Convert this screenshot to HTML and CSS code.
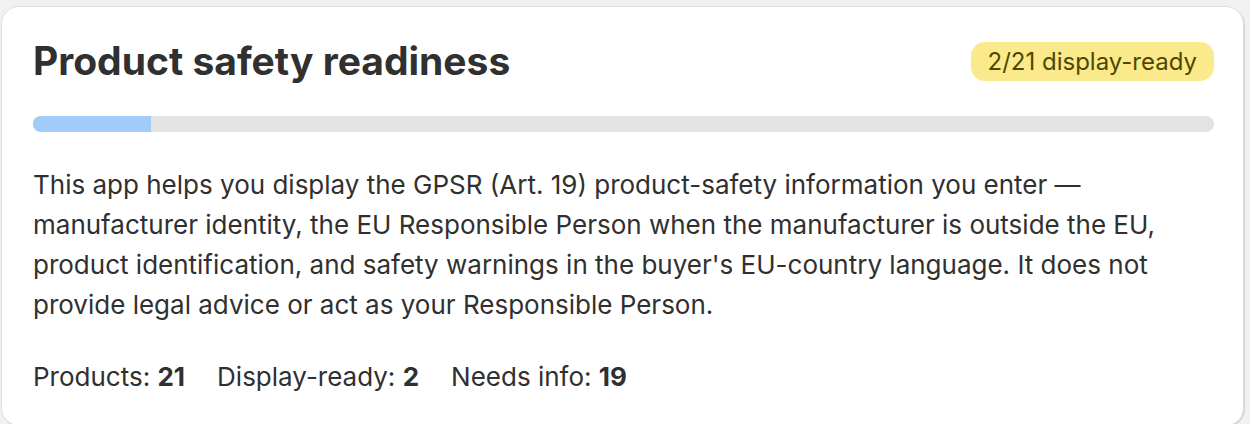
FILE: index.html
```html
<!DOCTYPE html>
<html lang="en">

<head>
    <meta charset="UTF-8">
    <meta name="viewport" content="width=device-width, initial-scale=1.0">
    <title>Product safety readiness</title>
    <link rel="stylesheet" href="styles.css">
</head>

<body>
    <div class="card">
        <div class="card-header">
            <h2 class="title">Product safety readiness</h2>
            <span class="badge">2/21 display-ready</span>
        </div>

        <div class="progress">
            <div class="progress-fill" style="width: 10%"></div>
        </div>

        <p class="info">This app helps you display the GPSR (Art. 19) product-safety information you enter &mdash;
            manufacturer identity, the EU Responsible Person when the manufacturer is outside the EU,
            product identification, and safety warnings in the buyer's EU-country language. It does not
            provide legal advice or act as your Responsible Person.</p>

        <div class="stats">
            <span>Products: <b>21</b></span>
            <span>Display-ready: <b>2</b></span>
            <span>Needs info: <b>19</b></span>
        </div>
    </div>
</body>

</html>
```

FILE: styles.css
```css
body {
    margin: 0;
    padding: 6px 6px 0 1px;
    background-color: #f1f1f1;
    font-family: Inter, "Noto Sans", sans-serif;
    color: #303030;
}

/* Card */
.card {
    background-color: #fff;
    border: 1px solid #dedede;
    border-radius: 18px;
    padding: 32px 29px 28px 31px;
    box-shadow: 1px 1px 0 #d6d6d6;
}

.card-header {
    display: flex;
    justify-content: space-between;
    align-items: center;
    height: 44px;
}

.title {
    margin: 0;
    font-size: 39px;
    line-height: 44px;
    font-weight: 700;
    color: #303030;
}

.badge {
    background-color: #fbea8c;
    color: #4f4700;
    font-size: 24px;
    line-height: 39px;
    padding: 0 17px;
    border-radius: 14px;
}

/* Progress */
.progress {
    margin-top: 33px;
    height: 16px;
    background-color: #e3e3e3;
    border-radius: 8px;
    overflow: hidden;
}

.progress-fill {
    height: 100%;
    background-color: #9fcdf8;
}

.info {
    margin: 33px 0 0 0;
    font-size: 26px;
    line-height: 40px;
}

.stats {
    display: flex;
    gap: 32px;
    margin-top: 32px;
    font-size: 26px;
    line-height: 40px;
}

.stats b {
    font-weight: 700;
}
```
